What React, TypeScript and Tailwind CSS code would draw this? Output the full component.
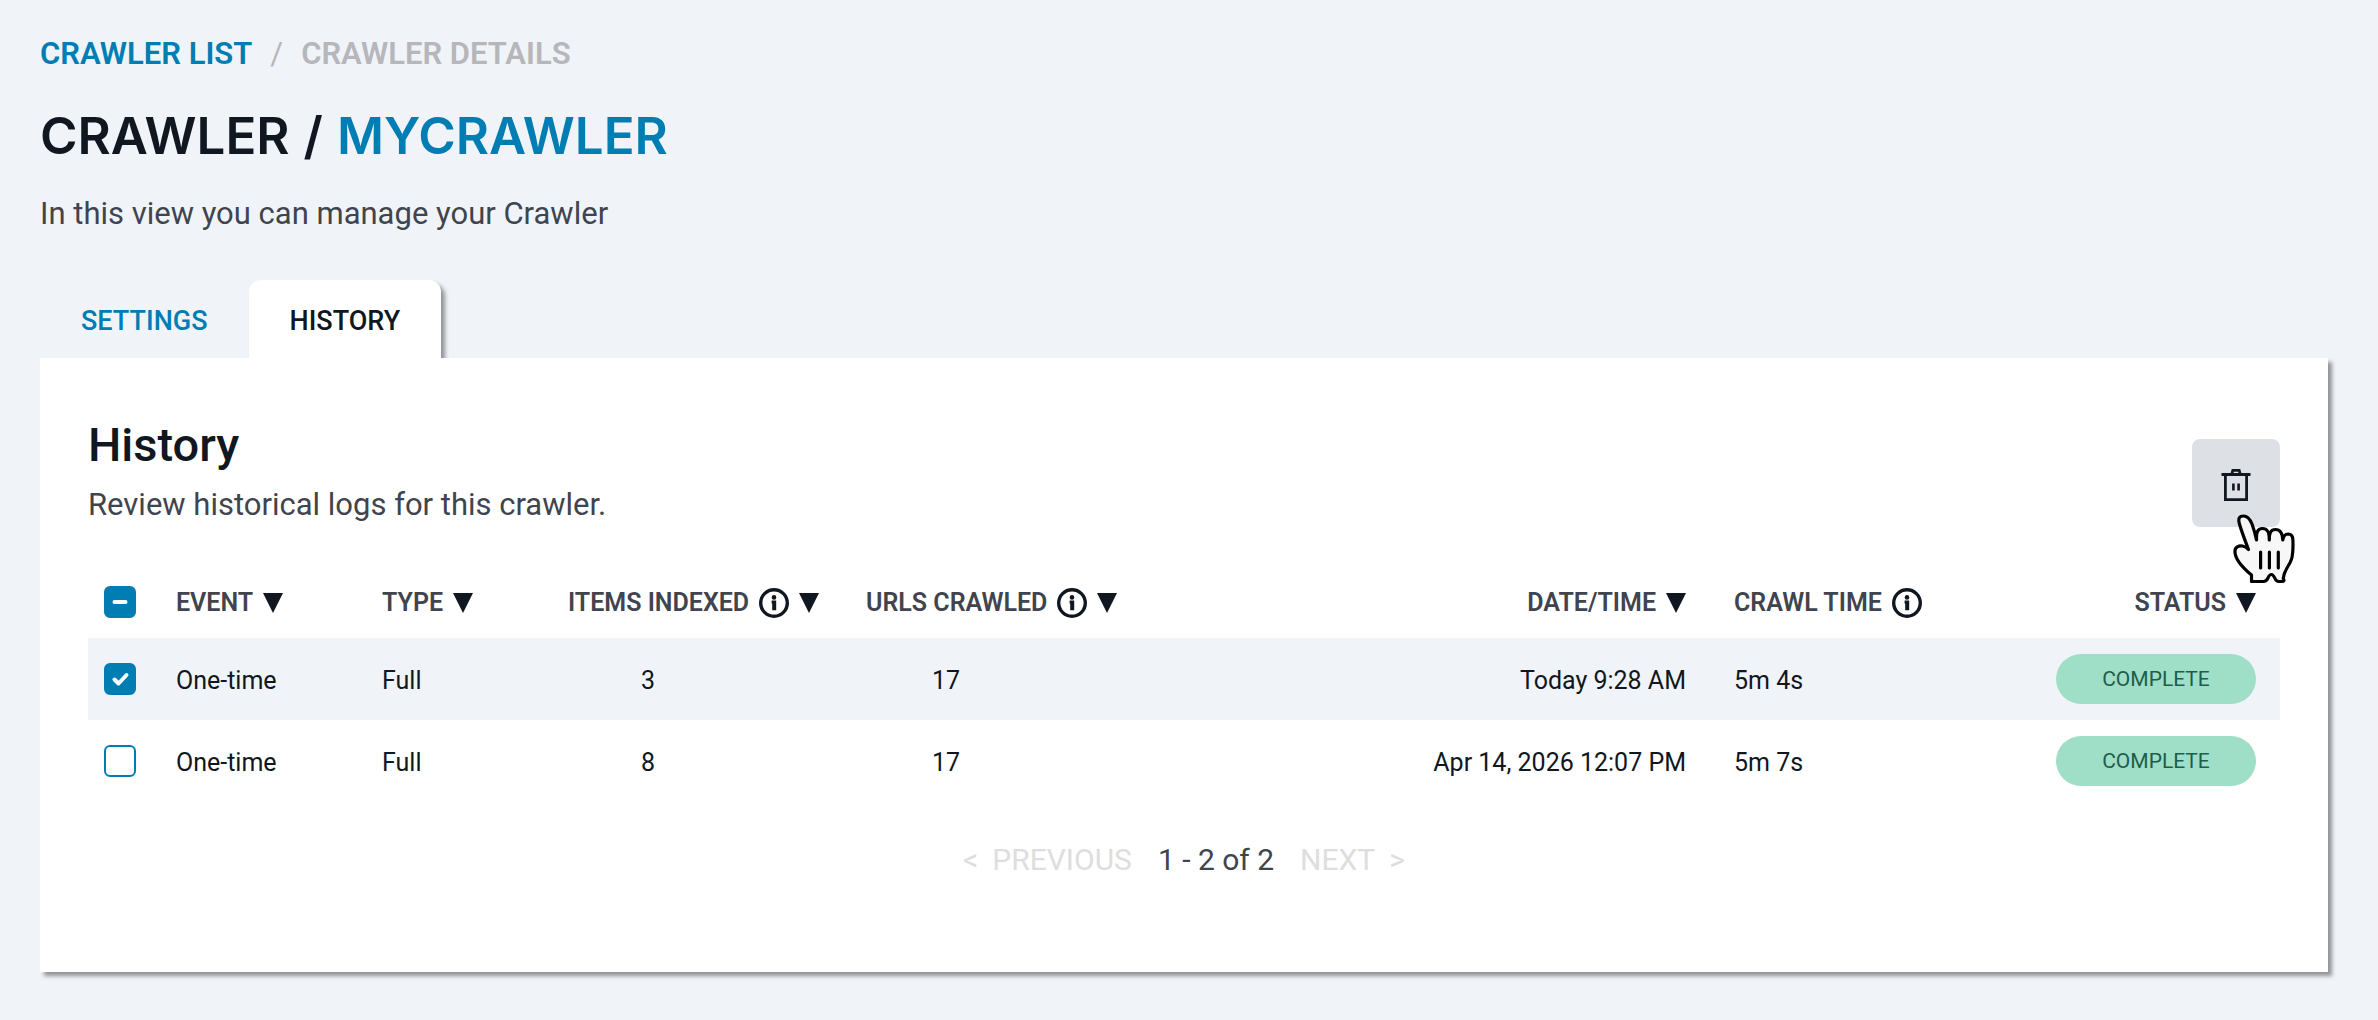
import { useState } from "react";

type Crawl = {
  id: number;
  event: string;
  type: string;
  items: number;
  urls: number;
  date: string;
  time: string;
  status: string;
};

const crawls: Crawl[] = [
  { id: 1, event: "One-time", type: "Full", items: 3, urls: 17, date: "Today 9:28 AM", time: "5m 4s", status: "COMPLETE" },
  { id: 2, event: "One-time", type: "Full", items: 8, urls: 17, date: "Apr 14, 2026 12:07 PM", time: "5m 7s", status: "COMPLETE" },
];

const SortButton = ({ label }: { label: string }) => (
  <button type="button" aria-label={`Sort by ${label}`} className="shrink-0">
    <svg viewBox="0 0 20 20" className="size-5 fill-[#101720]">
      <path d="M0 0h20L10 20z" />
    </svg>
  </button>
);

const InfoIcon = () => (
  <svg viewBox="0 0 30 30" className="size-[30px] shrink-0 fill-[#101720]">
    <circle cx="15" cy="15" r="13.3" fill="none" stroke="#101720" strokeWidth="3.4" />
    <circle cx="15" cy="9.4" r="2.3" />
    <path d="M12.6 12.6h4.6v9.600h-4v-6.800h-.6z" />
  </svg>
);

const HeaderCell = ({
  label,
  info = false,
  sort = true,
  className = "",
}: {
  label: string;
  info?: boolean;
  sort?: boolean;
  className?: string;
}) => (
  <span className={`flex items-center gap-[10px] whitespace-nowrap ${className}`}>
    {label}
    {info && <InfoIcon />}
    {sort && <SortButton label={label} />}
  </span>
);

const Checkbox = ({
  label,
  checked,
  mixed = false,
  onChange,
}: {
  label: string;
  checked: boolean;
  mixed?: boolean;
  onChange: () => void;
}) => (
  <span className="grid size-8">
    <input
      type="checkbox"
      aria-label={label}
      checked={checked}
      ref={(el) => {
        if (el) el.indeterminate = mixed;
      }}
      onChange={onChange}
      className="col-start-1 row-start-1 size-8 appearance-none rounded-md border-2 border-[#007db3] bg-white checked:bg-[#007db3] indeterminate:bg-[#007db3]"
    />
    <svg
      viewBox="0 0 32 32"
      className="pointer-events-none col-start-1 row-start-1 size-8 fill-none stroke-white stroke-4"
      strokeLinecap="round"
      strokeLinejoin="round"
    >
      {mixed && <path d="M10.5 16h11" />}
      {checked && !mixed && <path d="M10.5 16.5l4 4 8-8.5" />}
    </svg>
  </span>
);

const TrashIcon = () => (
  <svg viewBox="0 0 30 34" className="h-[34px] w-[30px] fill-none stroke-[#101720]" strokeWidth="2.8">
    <path d="M.5 6.500h29M4.400 7v24.600h21.200V7M10.800 6l1-3.600h6.400l1 3.600" />
    <path d="M12.400 15.500v7M17.600 15.500v7" strokeWidth="2.600" />
  </svg>
);

const HandPointer = () => (
  <svg
    viewBox="0 0 62 70"
    className="pointer-events-none absolute top-[75px] left-[41px] h-[70px] w-[62px] stroke-black"
    strokeWidth="3.2"
    strokeLinecap="round"
    strokeLinejoin="round"
  >
    <path
      fill="#f7f7f7"
      d="M15.500 35.500C13 29 8.500 17 6.600 10.500C4.500 3.500 7 2 10.500 2C14.500 2 17 5 19 10C21 15.500 22.500 21 23.500 26C23.300 19 24 14.500 29.500 14.500C34.500 14.500 36.300 18 36.300 26C36.300 19 37.500 15.500 42.500 15.500C47.500 15.500 49.500 19 49.800 26C50.500 21.500 52 20 55.500 20C60 20.500 60 24 60 30C60 44 58.500 47 54 54C51 59 50.500 61 50.200 64.500C51.500 66 51 67.500 49 67.500H46C44 67.500 42.800 66.500 42 64.500C40.500 61.500 39.500 60.500 38.500 60.500C37 60.500 36 61.500 35 64C33.500 67 32.500 67.500 30.500 67.500H18.500V61C9 53 1.500 45 2 37C2 33 5.500 31.500 9.500 32C12.500 32.500 14 33.500 15.500 35.500Z"
    />
    <path fill="none" d="M27.600 38v16M36.400 38v16M45.300 38v16" />
  </svg>
);

const App = () => {
  const [selected, setSelected] = useState<number[]>([1]);

  const toggle = (id: number) =>
    setSelected((prev) => (prev.includes(id) ? prev.filter((s) => s !== id) : [...prev, id]));

  const allSelected = selected.length === crawls.length;

  return (
    <div className="min-h-screen bg-[#f0f4f9] px-10 pt-8 pb-12 font-[Roboto,'Liberation_Sans',sans-serif] text-[#101720]">
      {/* Breadcrumb */}
      <nav aria-label="Breadcrumb" className="flex items-center gap-[18px] text-[31px] leading-11 font-semibold text-[#b6b6bb]">
        <a href="#" className="text-[#007db3]">CRAWLER LIST</a>
        <span className="font-normal">/</span>
        <span>CRAWLER DETAILS</span>
      </nav>

      <h1 className="mt-7 flex gap-[14px] font-[Inter,sans-serif] text-[51px] leading-16 font-semibold">
        <span>CRAWLER</span>
        <span>/</span>
        <span className="text-[#007db3]">MYCRAWLER</span>
      </h1>
      <p className="mt-6 text-[31px] leading-11 text-[#3f444e]">In this view you can manage your Crawler</p>

      {/* Tabs */}
      <div role="tablist" className="mt-11 flex overflow-hidden text-[27px] font-medium">
        <button type="button" role="tab" aria-selected="false" className="h-[78px] px-[41px] pt-1 text-[#007db3]">
          SETTINGS
        </button>
        <button
          type="button"
          role="tab"
          aria-selected="true"
          className="h-[78px] rounded-t-xl bg-white px-[41px] pt-1 shadow-[4px_4px_4px_rgba(0,0,0,0.4)]"
        >
          HISTORY
        </button>
      </div>

      {/* Panel */}
      <main className="mr-[10px] bg-white px-12 pt-[55px] pb-[88px] shadow-[4px_4px_4px_rgba(0,0,0,0.4)]">
        <div className="flex items-end justify-between">
          <div>
            <h2 className="text-[47px] leading-16 font-medium">History</h2>
            <p className="mt-1 text-[31px] leading-12 text-[#3f444e]">Review historical logs for this crawler.</p>
          </div>
          <div className="relative mb-0.5">
            <button
              type="button"
              aria-label="Delete selected logs"
              className="flex size-[88px] items-center justify-center rounded-lg bg-[#dde1e6] pt-1"
            >
              <TrashIcon />
            </button>
            <HandPointer />
          </div>
        </div>

        <table className="mt-[37px] w-full table-fixed text-left text-[25px]">
          <colgroup>
            <col className="w-18" />
            <col className="w-[206px]" />
            <col className="w-[186px]" />
            <col className="w-[298px]" />
            <col />
            <col className="w-[360px]" />
            <col className="w-[298px]" />
            <col className="w-[280px]" />
          </colgroup>
          <thead className="text-[#3f444e]">
            <tr className="h-18 *:font-semibold">
              <th className="pl-4">
                <Checkbox
                  label="Select all"
                  checked={allSelected}
                  mixed={selected.length > 0 && !allSelected}
                  onChange={() => setSelected(allSelected ? [] : crawls.map((c) => c.id))}
                />
              </th>
              <th className="pt-0.5 pl-4"><HeaderCell label="EVENT" /></th>
              <th className="pt-0.5 pl-4"><HeaderCell label="TYPE" /></th>
              <th className="pt-0.5 pl-4"><HeaderCell label="ITEMS INDEXED" info /></th>
              <th className="pt-0.5 pl-4"><HeaderCell label="URLS CRAWLED" info /></th>
              <th className="pt-0.5 pr-4"><HeaderCell label="DATE/TIME" className="justify-end" /></th>
              <th className="pt-0.5 pl-8"><HeaderCell label="CRAWL TIME" info sort={false} /></th>
              <th className="pt-0.5 pr-6"><HeaderCell label="STATUS" className="justify-end" /></th>
            </tr>
          </thead>
          <tbody>
            {crawls.map((crawl) => (
              <tr key={crawl.id} className={`h-[82px] ${selected.includes(crawl.id) ? "bg-[#f0f4f9]" : ""}`}>
                <td className="pl-4">
                  <Checkbox
                    label={`Select crawl ${crawl.id}`}
                    checked={selected.includes(crawl.id)}
                    onChange={() => toggle(crawl.id)}
                  />
                </td>
                <td className="pt-1 pl-4">{crawl.event}</td>
                <td className="pt-1 pl-4">{crawl.type}</td>
                <td className="pt-1 pl-4"><div className="w-40 text-center">{crawl.items}</div></td>
                <td className="pt-1 pl-4"><div className="w-40 text-center">{crawl.urls}</div></td>
                <td className="pt-1 pr-4 text-right">{crawl.date}</td>
                <td className="pt-1 pl-8">{crawl.time}</td>
                <td className="pr-6">
                  <div className="ml-auto flex h-[50px] w-[200px] items-center justify-center rounded-full bg-[#9fdfc7] pt-0.5 text-[21px] text-[#1f5c4b]">
                    {crawl.status}
                  </div>
                </td>
              </tr>
            ))}
          </tbody>
        </table>

        {/* Pagination */}
        <div className="mt-[34px] flex items-center justify-center gap-[26px] text-[30px] leading-12">
          <button type="button" disabled className="flex gap-[14px] text-[#dedede]">
            <span>&lt;</span>PREVIOUS
          </button>
          <span className="text-[#3f444e]">1 - 2 of 2</span>
          <button type="button" disabled className="flex gap-[14px] text-[#dedede]">
            NEXT<span>&gt;</span>
          </button>
        </div>
      </main>
    </div>
  );
};

export default App;
